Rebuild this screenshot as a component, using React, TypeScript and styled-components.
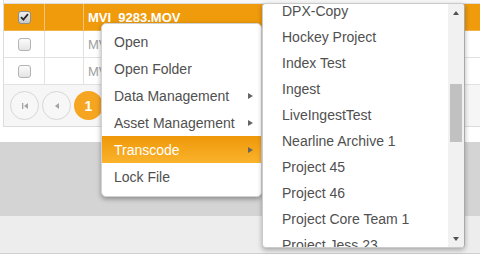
import React from "react";
import styled, { createGlobalStyle, css } from "styled-components";

const Global = createGlobalStyle`
  html, body { margin: 0; padding: 0; background: #fff; }
  body { font-family: "Liberation Sans", Arial, sans-serif; }
  * { box-sizing: border-box; }
`;

const Page = styled.div`
  position: relative;
  width: 480px;
  height: 256px;
  overflow: hidden;
  display: flex;
  flex-direction: column;
  background: #fff;
`;

const Grid = styled.div`
  margin-left: 3px;
  border-left: 1px solid #dcdcdc;
  display: flex;
  flex-direction: column;
`;

const HeaderStrip = styled.div`
  height: 4px;
  background: #f7f7f7;
  border-bottom: 1px solid #dcdcdc;
`;

const Row = styled.div<{ $selected?: boolean }>`
  display: grid;
  grid-template-columns: 41px 39px 1fr;
  height: 27px;
  border-bottom: 1px solid ${(p) => (p.$selected ? "#f2b24a" : "#e2e2e2")};
  background: ${(p) => (p.$selected ? "#ef9b0c" : "#fff")};
`;

const Cell = styled.div<{ $selected?: boolean }>`
  display: flex;
  align-items: center;
  justify-content: center;
  border-right: 1px solid ${(p) => (p.$selected ? "#f5c57a" : "#e2e2e2")};
`;

const NameCell = styled.div<{ $selected?: boolean }>`
  display: flex;
  align-items: center;
  padding-left: 4px;
  font-size: 13px;
  font-weight: ${(p) => (p.$selected ? 700 : 400)};
  color: ${(p) => (p.$selected ? "#fff" : "#a0a0a0")};
  white-space: nowrap;
  overflow: hidden;
`;

const Check = styled.span<{ $checked?: boolean }>`
  width: 13px;
  height: 13px;
  border-radius: 3px;
  border: 1px solid ${(p) => (p.$checked ? "#8e8e8e" : "#b3b3b3")};
  background: ${(p) =>
    p.$checked
      ? "linear-gradient(#eeeeee, #c9c9c9)"
      : "linear-gradient(#fbfbfb, #e4e4e4)"};
  display: flex;
  align-items: center;
  justify-content: center;
`;

const Pager = styled.div`
  margin-left: 3px;
  height: 42px;
  border-left: 1px solid #dcdcdc;
  border-bottom: 1px solid #dcdcdc;
  background: #f6f6f6;
  display: flex;
  align-items: center;
  gap: 3px;
  padding-left: 6px;
`;

const PageBtn = styled.div<{ $active?: boolean }>`
  width: 29px;
  height: 29px;
  border-radius: 50%;
  display: flex;
  align-items: center;
  justify-content: center;
  font-size: 14px;
  font-weight: 700;
  ${(p) =>
    p.$active
      ? css`
          background: #f6a521;
          color: #fff;
        `
      : css`
          background: #f7f7f7;
          border: 1px solid #d6d6d6;
          color: #a0a0a0;
        `}
`;

const Gap = styled.div`
  height: 15px;
`;

const DarkBand = styled.div`
  height: 74px;
  background: #d4d4d4;
`;

const LightBand = styled.div`
  height: 38px;
  background: #ededed;
  border-bottom: 1px solid #cfcfcf;
`;

const Menu = styled.div`
  position: absolute;
  left: 101px;
  top: 23px;
  width: 161px;
  padding: 4px 0 6px;
  background: #fff;
  border: 1px solid #d2d2d2;
  border-radius: 5px;
  box-shadow: 0 2px 5px rgba(0, 0, 0, 0.35);
`;

const MenuItem = styled.div<{ $active?: boolean }>`
  height: 27px;
  display: flex;
  align-items: center;
  justify-content: space-between;
  padding: 0 8px 0 12px;
  font-size: 14px;
  color: ${(p) => (p.$active ? "#fff" : "#505050")};
  background: ${(p) =>
    p.$active ? "linear-gradient(#ef9809, #fab32c)" : "transparent"};
  white-space: nowrap;
`;

const Caret = styled.span`
  width: 0;
  height: 0;
  border-left: 5px solid #666;
  border-top: 3.5px solid transparent;
  border-bottom: 3.5px solid transparent;
`;

const SubMenu = styled.div`
  position: absolute;
  left: 262px;
  top: 3px;
  width: 203px;
  height: 245px;
  background: #fff;
  border: 1px solid #cbcbcb;
  border-right-color: #a9a9a9;
  border-radius: 4px;
  box-shadow: 0 2px 5px rgba(0, 0, 0, 0.3);
  display: flex;
  overflow: hidden;
`;

const Viewport = styled.div`
  flex: 1;
  overflow: hidden;
`;

const List = styled.div`
  margin-top: -6px;
  display: flex;
  flex-direction: column;
`;

const SubItem = styled.div`
  height: 26px;
  line-height: 26px;
  padding-left: 19px;
  font-size: 14px;
  color: #505050;
  white-space: nowrap;
`;

const Scrollbar = styled.div`
  width: 16px;
  background: #f1f1f1;
  display: flex;
  flex-direction: column;
`;

const ScrollBtn = styled.div`
  height: 17px;
  display: flex;
  align-items: center;
  justify-content: center;
`;

const Tri = styled.span<{ $down?: boolean }>`
  width: 0;
  height: 0;
  border-left: 3.5px solid transparent;
  border-right: 3.5px solid transparent;
  ${(p) =>
    p.$down
      ? css`
          border-top: 4px solid #505050;
        `
      : css`
          border-bottom: 4px solid #505050;
        `}
`;

const Track = styled.div`
  flex: 1;
  padding: 0 2px;
`;

const Thumb = styled.div`
  margin-top: 63px;
  height: 58px;
  background: #c1c1c1;
`;

const CheckMark = () => (
  <svg width="9" height="8" viewBox="0 0 9 8">
    <path d="M1 4.2 L3.4 6.6 L8 1.2" stroke="#2a2a2a" strokeWidth="1.8" fill="none" />
  </svg>
);

const FirstIcon = () => (
  <svg width="8" height="8" viewBox="0 0 8 8">
    <rect x="1" y="1" width="1.3" height="6" fill="#a3a3a3" />
    <path d="M7 1 L3 4 L7 7 Z" fill="#a3a3a3" />
  </svg>
);

const PrevIcon = () => (
  <svg width="8" height="8" viewBox="0 0 8 8">
    <path d="M6 1 L2 4 L6 7 Z" fill="#a3a3a3" />
  </svg>
);

const rows = [
  { name: "MVI_9283.MOV", selected: true },
  { name: "MVI_9284.MOV", selected: false },
  { name: "MVI_9285.MOV", selected: false },
];

const menuItems = [
  { label: "Open" },
  { label: "Open Folder" },
  { label: "Data Management", sub: true },
  { label: "Asset Management", sub: true },
  { label: "Transcode", sub: true, active: true },
  { label: "Lock File" },
];

const projects = [
  "DPX-Copy",
  "Hockey Project",
  "Index Test",
  "Ingest",
  "LiveIngestTest",
  "Nearline Archive 1",
  "Project 45",
  "Project 46",
  "Project Core Team 1",
  "Project Jess 23",
];

export default function App() {
  return (
    <Page>
      <Global />
      <Grid>
        <HeaderStrip />
        {rows.map((r) => (
          <Row key={r.name} $selected={r.selected}>
            <Cell $selected={r.selected}>
              <Check $checked={r.selected}>{r.selected && <CheckMark />}</Check>
            </Cell>
            <Cell $selected={r.selected} />
            <NameCell $selected={r.selected}>{r.name}</NameCell>
          </Row>
        ))}
      </Grid>
      <Pager>
        <PageBtn>
          <FirstIcon />
        </PageBtn>
        <PageBtn>
          <PrevIcon />
        </PageBtn>
        <PageBtn $active>1</PageBtn>
      </Pager>
      <Gap />
      <DarkBand />
      <LightBand />

      <Menu>
        {menuItems.map((m) => (
          <MenuItem key={m.label} $active={m.active}>
            <span>{m.label}</span>
            {m.sub && <Caret />}
          </MenuItem>
        ))}
      </Menu>

      <SubMenu>
        <Viewport>
          <List>
            {projects.map((p) => (
              <SubItem key={p}>{p}</SubItem>
            ))}
          </List>
        </Viewport>
        <Scrollbar>
          <ScrollBtn>
            <Tri />
          </ScrollBtn>
          <Track>
            <Thumb />
          </Track>
          <ScrollBtn>
            <Tri $down />
          </ScrollBtn>
        </Scrollbar>
      </SubMenu>
    </Page>
  );
}
